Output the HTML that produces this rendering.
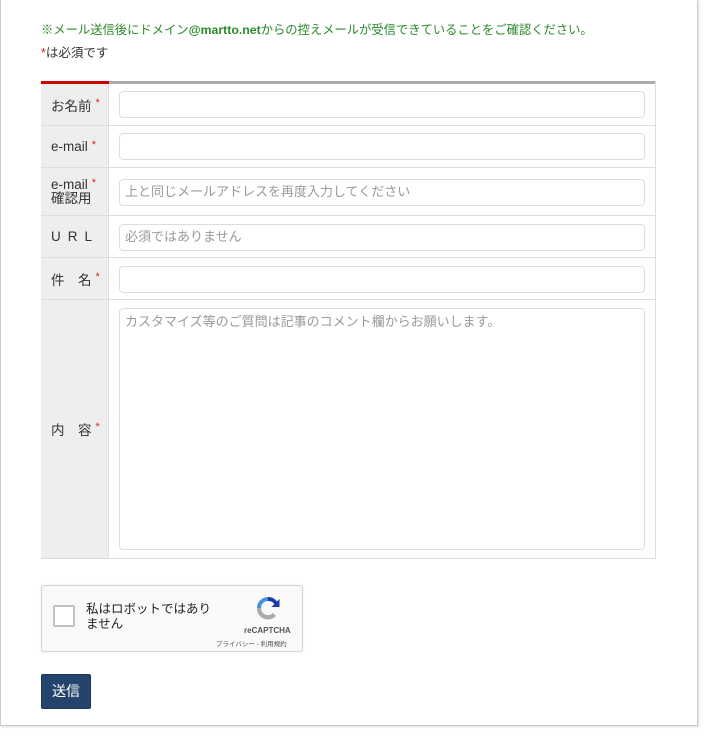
<!DOCTYPE html>
<html><head><meta charset="utf-8"><style>
body{margin:0;width:710px;height:740px;background:#fff;font-family:"Liberation Sans","Noto Sans CJK JP",sans-serif;position:relative;overflow:hidden}
.box{position:absolute;left:0;top:0;width:696px;height:725px;border:1px solid #ccc;border-top:none;box-shadow:1px 1px 2px rgba(0,0,0,.15)}
.a{position:absolute}
.note{left:41px;top:20px;font-size:12.3px;color:#2a8a2a}
.req{left:41px;top:42px;font-size:12.5px;color:#333}
.star{color:#d22}
.tbl{left:41px;top:81px;width:613px;height:477px;border:1px solid #ddd;border-top:none}
.top1{left:41px;top:81px;width:68px;height:3px;background:#c00}
.top2{left:109px;top:81px;width:546px;height:3px;background:#aaa}
.lab{position:absolute;left:41px;width:68px;background:#eee;border-right:1px solid #ddd;border-bottom:1px solid #ddd;font-size:13.5px;color:#333;box-sizing:border-box;padding-left:10px;display:flex;align-items:center}
.rowline{position:absolute;left:109px;width:546px;height:1px;background:#ddd}
.inp{position:absolute;left:119px;width:526px;height:27px;border:1px solid #ddd;border-radius:4px;box-sizing:border-box;font-size:13px;color:#999;padding:0 0 0 5px;line-height:24px}
.lab sup{color:#d22;font-size:11px;margin-left:4px;vertical-align:top;position:relative;top:-2px}
</style></head><body>
<div class="box"></div>
<div class="a note">※メール送信後にドメイン<b>@martto.net</b>からの控えメールが受信できていることをご確認ください。</div>
<div class="a req"><span class="star">*</span>は必須です</div>
<div class="a tbl"></div>
<div class="a top1"></div><div class="a top2"></div>
<div class="lab" style="top:84px;height:42px">お名前<sup>*</sup></div>
<div class="lab" style="top:126px;height:42px">e-mail<sup>*</sup></div>
<div class="lab" style="top:168px;height:48px;line-height:14px"><div>e-mail<sup>*</sup><br>確認用</div></div>
<div class="lab" style="top:216px;height:42px;letter-spacing:7px">URL</div>
<div class="lab" style="top:258px;height:42px">件　名<sup>*</sup></div>
<div class="lab" style="top:300px;height:258px;border-bottom:none">内　容<sup>*</sup></div>
<div class="rowline" style="top:125px"></div>
<div class="rowline" style="top:167px"></div>
<div class="rowline" style="top:215px"></div>
<div class="rowline" style="top:257px"></div>
<div class="rowline" style="top:299px"></div>
<div class="inp" style="top:91px"></div>
<div class="inp" style="top:133px"></div>
<div class="inp" style="top:179px">上と同じメールアドレスを再度入力してください</div>
<div class="inp" style="top:224px">必須ではありません</div>
<div class="inp" style="top:266px"></div>
<div class="inp" style="top:308px;height:242px;line-height:20px;padding-top:3px">カスタマイズ等のご質問は記事のコメント欄からお願いします。</div>
<div class="a" style="left:41px;top:585px;width:260px;height:65px;background:#f9f9f9;border:1px solid #d3d3d3;border-radius:3px;box-shadow:0 0 3px rgba(0,0,0,.08)"></div>
<div class="a" style="left:53px;top:605px;width:22px;height:22px;border:2px solid #c1c1c1;border-radius:2px;background:#fff;box-sizing:border-box"></div>
<div class="a" style="left:86px;top:602px;font-size:12.5px;color:#222;line-height:15px">私はロボットではあり<br>ません</div>
<svg class="a" style="left:254px;top:594px" width="28" height="28" viewBox="0 0 28 28"><path d="M14 3a11 11 0 0 1 9 4.5l2.5-2.5v8h-8l2.8-2.8A7 7 0 0 0 14 7z" fill="#1c3aa9"/><path d="M3 14A11 11 0 0 1 14 3v4a7 7 0 0 0-7 7z" fill="#4a90e2"/><path d="M3 14h4a7 7 0 0 0 12 5l3 3A11 11 0 0 1 3 14z" fill="#aaa"/></svg>
<div class="a" style="left:244px;top:626px;font-size:8px;color:#555;font-weight:bold">reCAPTCHA</div>
<div class="a" style="left:216px;top:638px;font-size:6.5px;color:#555">プライバシー - 利用規約</div>
<div class="a" style="left:41px;top:674px;width:50px;height:35px;background:#24446e;border:1px solid #1b3558;border-radius:2px;box-sizing:border-box;color:#fff;font-size:14px;text-align:center;line-height:33px">送信</div>
</body></html>
